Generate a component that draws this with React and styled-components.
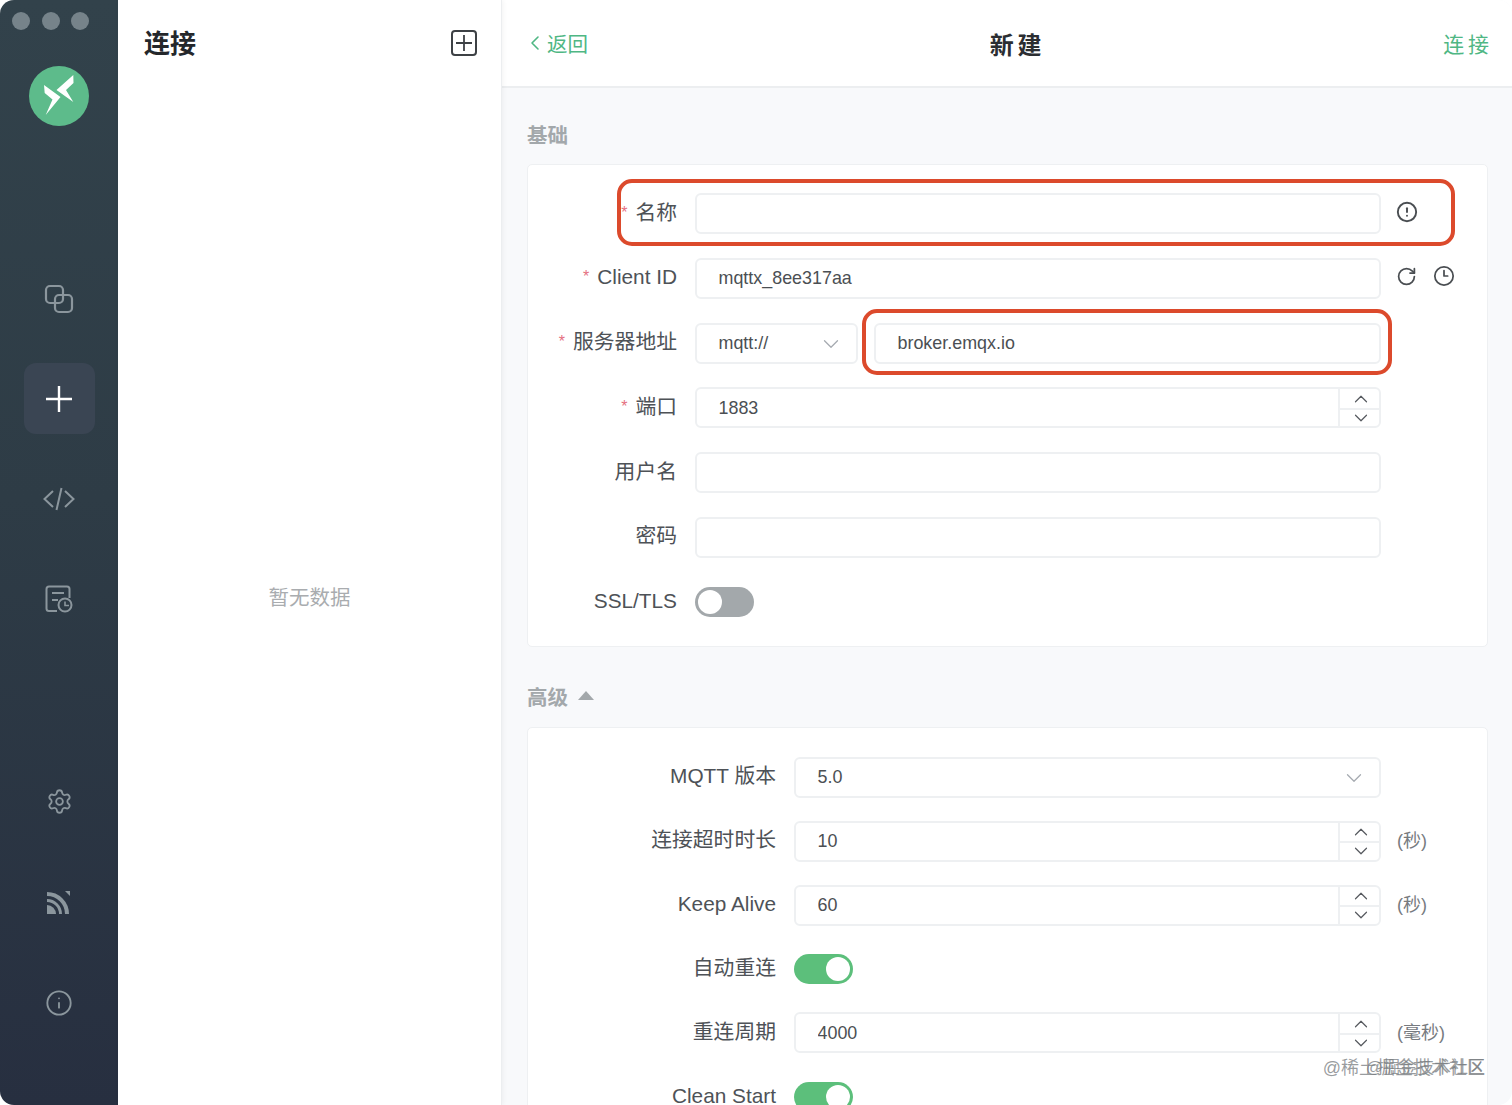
import React from 'react'
import styled, { createGlobalStyle } from 'styled-components'
import { ChevronLeft, ChevronUp, ChevronDown, Settings, Info, CircleAlert, RotateCw, Clock3 } from 'lucide-react'

const GlobalStyle = createGlobalStyle`
  html, body { margin: 0; background: #fff; }
  * { box-sizing: border-box; }
  body { font-family: "Liberation Sans", "Noto Sans CJK SC", sans-serif; }
`

const Window = styled.div`
  position: relative;
  display: flex;
  width: 1512px;
  height: 1105px;
  overflow: hidden;
  border-radius: 14px;
  background: #fff;
`

const Sidebar = styled.aside`
  width: 118px;
  flex-shrink: 0;
  display: flex;
  flex-direction: column;
  align-items: center;
  padding-bottom: 67px;
  background: linear-gradient(180deg, #32424b 0%, #2e3c46 45%, #272f40 100%);
`
const Traffic = styled.div`
  align-self: flex-start;
  display: flex;
  gap: 11.5px;
  padding: 12px 0 0 12px;
`
const Dot = styled.span`
  width: 18px;
  height: 18px;
  border-radius: 50%;
  background: #76838a;
`
const Logo = styled.svg`
  width: 60px;
  height: 60px;
  margin-top: 36px;
  margin-bottom: 137px;
`
const NavGroup = styled.nav`
  display: flex;
  flex-direction: column;
  gap: 29.3px;
  margin-top: ${p => p.$auto ? 'auto' : '0'};
`
const NavItem = styled.div`
  width: 71px;
  height: 71px;
  display: flex;
  align-items: center;
  justify-content: center;
  border-radius: 12px;
  color: ${p => p.$active ? '#fff' : '#8b969d'};
  background: ${p => p.$active ? '#3a4553' : 'transparent'};
`

const ListPanel = styled.section`
  position: relative;
  z-index: 1;
  width: 384px;
  flex-shrink: 0;
  display: flex;
  flex-direction: column;
  background: #fff;
  border-right: 1px solid #eceef0;
  box-shadow: 1px 0 5px rgba(0, 0, 0, 0.05);
`
const ListHeader = styled.div`
  height: 88px;
  display: flex;
  align-items: center;
  justify-content: space-between;
  padding: 0 24px 1px 26px;
`
const ListTitle = styled.h1`
  margin: 0 0 3px;
  font-size: 26px;
  font-weight: 700;
  color: #24272b;
`
const AddBox = styled.div`
  width: 26px;
  height: 26px;
  display: flex;
  align-items: center;
  justify-content: center;
  border: 2px solid #3d4145;
  border-radius: 4px;
  color: #3d4145;
`
const EmptyWrap = styled.div`
  height: 1018px;
  display: flex;
`
const EmptyText = styled.div`
  flex: 1;
  display: flex;
  align-items: center;
  justify-content: center;
  padding-bottom: 1px;
  font-size: 20.5px;
  color: #a9acaf;
`

const Main = styled.main`
  flex: 1;
  min-width: 0;
  display: flex;
  flex-direction: column;
  background: #f8f9fb;
`
const TopBar = styled.header`
  height: 88px;
  flex-shrink: 0;
  display: flex;
  align-items: center;
  justify-content: space-between;
  padding: 0 23px 0 21px;
  background: #fff;
  border-bottom: 2px solid #eceef0;
`
const BackLink = styled.a`
  display: flex;
  align-items: center;
  font-size: 20.5px;
  color: #4fb784;
`
const PageTitle = styled.h2`
  margin: 0;
  font-size: 24px;
  font-weight: 700;
  color: #2b2e32;
  word-spacing: -3px;
`
const ConnectLink = styled.a`
  font-size: 21px;
  color: #4fb784;
  word-spacing: -2px;
`
const Body = styled.div`
  padding: 32px 24px 0 25px;
`
const SectionTitle = styled.div`
  display: flex;
  align-items: center;
  gap: 10px;
  height: 28px;
  margin-top: ${p => p.$top || 0}px;
  margin-bottom: ${p => p.$bottom || 16}px;
  font-size: 20.5px;
  font-weight: 700;
  color: #a3a8ab;
`
const Caret = styled.span`
  width: 0;
  height: 0;
  border-left: 8px solid transparent;
  border-right: 8px solid transparent;
  border-bottom: 9px solid #a3a8ab;
`
const Card = styled.div`
  display: flex;
  flex-direction: column;
  gap: ${p => p.$gap}px;
  padding: ${p => p.$pad};
  background: #fff;
  border: 1.5px solid #eef0f2;
  border-radius: 5px;
`
const FormRow = styled.div`
  position: relative;
  display: flex;
  align-items: center;
  height: 41px;
`
const Label = styled.label`
  flex-shrink: 0;
  width: ${p => p.$width}px;
  padding: 0 18px 2px 0;
  text-align: right;
  font-size: 20.8px;
  line-height: 24px;
  color: #4e5257;
  white-space: nowrap;
`
const Star = styled.span`
  margin-right: 8px;
  font-size: 16px;
  line-height: 1;
  color: #e5707f;
  vertical-align: 2px;
`
const Controls = styled.div`
  flex: 1;
  min-width: 0;
  display: flex;
  gap: 16px;
`
const Field = styled.div`
  position: relative;
  flex: 1;
  min-width: 0;
  height: 41px;
`
const TextInput = styled.input`
  display: block;
  width: 100%;
  height: 41px;
  padding: 1px 21.5px 0;
  font: 17.9px "Liberation Sans", sans-serif;
  color: #4b4f53;
  background: #fff;
  border: 2px solid #eef0f2;
  border-radius: 6px;
  outline: none;
`
const SelectBox = styled.div`
  flex: ${p => p.$width ? `0 0 ${p.$width}px` : 1};
  height: 41px;
  display: flex;
  align-items: center;
  justify-content: space-between;
  padding: 1px 12px 0 21.5px;
  font-size: 17.9px;
  color: #4b4f53;
  border: 2px solid #eef0f2;
  border-radius: 6px;
  & > svg { color: #a6abb1; }
`
const Stepper = styled.div`
  position: absolute;
  top: 0;
  right: 0;
  bottom: 0;
  width: 43px;
  display: grid;
  grid-template-rows: minmax(0, 1fr) minmax(0, 1fr);
  border-left: 2px solid #eef0f2;
  color: #55595e;
`
const StepButton = styled.div`
  min-height: 0;
  display: flex;
  align-items: center;
  justify-content: center;
  padding: ${p => p.$lower ? '0 0 2px' : '2px 0 0'};
  border-top: ${p => p.$lower ? '2px solid #eef0f2' : 'none'};
`
const Extras = styled.div`
  flex-shrink: 0;
  width: 106px;
  display: flex;
  align-items: center;
  gap: 17px;
  padding-left: 16px;
  padding-bottom: 4px;
  font-size: 18px;
  color: #777b7f;
  & > svg { color: #4a4e52; margin-left: -1px; }
`
const Toggle = styled.div`
  position: relative;
  width: 59px;
  height: 30px;
  border-radius: 15px;
  background: ${p => p.$on ? '#5cbf7b' : '#a3a8ab'};
  &::after {
    content: '';
    position: absolute;
    top: 3px;
    left: ${p => p.$on ? '32px' : '3px'};
    width: 24px;
    height: 24px;
    border-radius: 50%;
    background: #fff;
  }
`
const Highlight = styled.div`
  position: absolute;
  top: ${p => p.$top}px;
  bottom: ${p => p.$bottom}px;
  left: ${p => p.$left}px;
  right: ${p => p.$right}px;
  border: 4px solid #dc4a2c;
  border-radius: 15px;
  pointer-events: none;
`
const Watermark = styled.div`
  position: absolute;
  right: ${p => p.$right}px;
  bottom: ${p => p.$bottom}px;
  font-size: ${p => p.$size}px;
  color: rgba(120, 124, 128, 0.75);
  white-space: nowrap;
`

const LogoMark = () => (
  <Logo viewBox="0 0 60 60">
    <circle cx="30" cy="30" r="30" fill="#5dbb8b" />
    <path d="M44.3 9 L44.5 17 L37 24 L44.3 36 L27.5 24 Z" fill="#fff" />
    <path d="M15 19 L31.500 31 L16.7 49 L23.5 33.500 L15.700 27 Z" fill="#fff" />
  </Logo>
)

const CopyIcon = () => (
  <svg width="30" height="30" viewBox="0 0 30 30" fill="none" stroke="currentColor" strokeWidth="2.2">
    <rect x="2" y="2" width="17" height="17" rx="4" />
    <rect x="11" y="11" width="17" height="17" rx="4" />
  </svg>
)
const PlusIcon = () => (
  <svg width="26" height="26" viewBox="0 0 26 26" stroke="currentColor" strokeWidth="2.4">
    <path d="M13 0 V26 M0 13 H26" />
  </svg>
)
const CodeIcon = () => (
  <svg width="32" height="24" viewBox="0 0 32 24" fill="none" stroke="currentColor" strokeWidth="2">
    <path d="M10 4 L1.5 12 L10 20 M22 4 L30.5 12 L22 20 M18.5 1 L13.5 23" />
  </svg>
)
const LogIcon = () => (
  <svg width="28" height="28" viewBox="0 0 28 28" fill="none" stroke="currentColor" strokeWidth="2">
    <path d="M12 26 H4 Q1.5 26 1.5 23.5 V4 Q1.5 1.5 4 1.5 H22 Q24.500 1.5 24.5 4 V13" />
    <path d="M7 8 H19 M7 15 H13" />
    <circle cx="20" cy="20" r="6.5" />
    <path d="M20 16.500 V20.500 H24" strokeWidth="1.6" />
  </svg>
)
const FeedIcon = () => (
  <svg width="24" height="24" viewBox="0 0 24 24" fill="none" stroke="currentColor">
    <defs>
      <clipPath id="feedClip"><rect x="0" y="1" width="23" height="23" /></clipPath>
    </defs>
    <g clipPath="url(#feedClip)">
      <circle cx="0" cy="24" r="9" fill="currentColor" stroke="none" />
      <circle cx="0" cy="24" r="13.5" strokeWidth="3" />
      <circle cx="0" cy="24" r="20" strokeWidth="4" />
      <path d="M18 1 H23 V6 Z" fill="currentColor" stroke="none" />
    </g>
  </svg>
)

const NumberField = ({ value }) => (
  <Field>
    <TextInput defaultValue={value} />
    <Stepper>
      <StepButton><ChevronUp size={22} strokeWidth={1.3} /></StepButton>
      <StepButton $lower><ChevronDown size={22} strokeWidth={1.3} /></StepButton>
    </Stepper>
  </Field>
)

const Row = ({ label, required, width, children, extras, highlight }) => (
  <FormRow>
    <Label $width={width}>{required && <Star>*</Star>}{label}</Label>
    <Controls>{children}</Controls>
    <Extras>{extras}</Extras>
    {highlight}
  </FormRow>
)

export default function App() {
  return (
    <Window>
      <GlobalStyle />
      <Sidebar>
        <Traffic><Dot /><Dot /><Dot /></Traffic>
        <LogoMark />
        <NavGroup>
          <NavItem><CopyIcon /></NavItem>
          <NavItem $active><PlusIcon /></NavItem>
          <NavItem><CodeIcon /></NavItem>
          <NavItem><LogIcon /></NavItem>
        </NavGroup>
        <NavGroup $auto>
          <NavItem><Settings size={27} strokeWidth={1.6} /></NavItem>
          <NavItem><FeedIcon /></NavItem>
          <NavItem><Info size={28} strokeWidth={1.6} /></NavItem>
        </NavGroup>
      </Sidebar>

      <ListPanel>
        <ListHeader>
          <ListTitle>连接</ListTitle>
          <AddBox>
            <svg width="16" height="16" viewBox="0 0 16 16" stroke="currentColor" strokeWidth="1.8">
              <path d="M8 0 V16 M0 8 H16" />
            </svg>
          </AddBox>
        </ListHeader>
        <EmptyWrap><EmptyText>暂无数据</EmptyText></EmptyWrap>
      </ListPanel>

      <Main>
        <TopBar>
          <BackLink><ChevronLeft size={24} strokeWidth={1.6} />返回</BackLink>
          <PageTitle>新 建</PageTitle>
          <ConnectLink>连 接</ConnectLink>
        </TopBar>
        <Body>
          <SectionTitle>基础</SectionTitle>
          <Card $gap={23.8} $pad="28px 0 23px">
            <Row
              label="名称"
              required
              width={167}
              extras={<CircleAlert size={22} strokeWidth={2.1} />}
              highlight={<Highlight $top={-14} $bottom={-12} $left={89} $right={32} />}
            >
              <Field><TextInput /></Field>
            </Row>
            <Row
              label="Client ID"
              required
              width={167}
              extras={<><RotateCw size={21} strokeWidth={2} /><Clock3 size={22} strokeWidth={1.9} /></>}
            >
              <Field><TextInput defaultValue="mqttx_8ee317aa" /></Field>
            </Row>
            <Row label="服务器地址" required width={167}>
              <SelectBox $width={163}>mqtt://<ChevronDown size={26} strokeWidth={1.2} /></SelectBox>
              <Field>
                <TextInput defaultValue="broker.emqx.io" />
                <Highlight $top={-14} $bottom={-11} $left={-12} $right={-11} />
              </Field>
            </Row>
            <Row label="端口" required width={167}><NumberField value="1883" /></Row>
            <Row label="用户名" width={167}><Field><TextInput /></Field></Row>
            <Row label="密码" width={167}><Field><TextInput /></Field></Row>
            <Row label="SSL/TLS" width={167}><Toggle /></Row>
          </Card>

          <SectionTitle $top={35} $bottom={17}>高级<Caret /></SectionTitle>
          <Card $gap={22.9} $pad="29px 0 30px">
            <Row label="MQTT 版本" width={266}>
              <SelectBox>5.0<ChevronDown size={26} strokeWidth={1.2} /></SelectBox>
            </Row>
            <Row label="连接超时时长" width={266} extras="(秒)"><NumberField value="10" /></Row>
            <Row label="Keep Alive" width={266} extras="(秒)"><NumberField value="60" /></Row>
            <Row label="自动重连" width={266}><Toggle $on /></Row>
            <Row label="重连周期" width={266} extras="(毫秒)"><NumberField value="4000" /></Row>
            <Row label="Clean Start" width={266}><Toggle $on /></Row>
          </Card>
        </Body>
      </Main>

      <Watermark $right={27} $bottom={26} $size={18}>@稀土掘金技术社区</Watermark>
      <Watermark $right={27} $bottom={27} $size={17}>@掘金技术社区</Watermark>
    </Window>
  )
}
